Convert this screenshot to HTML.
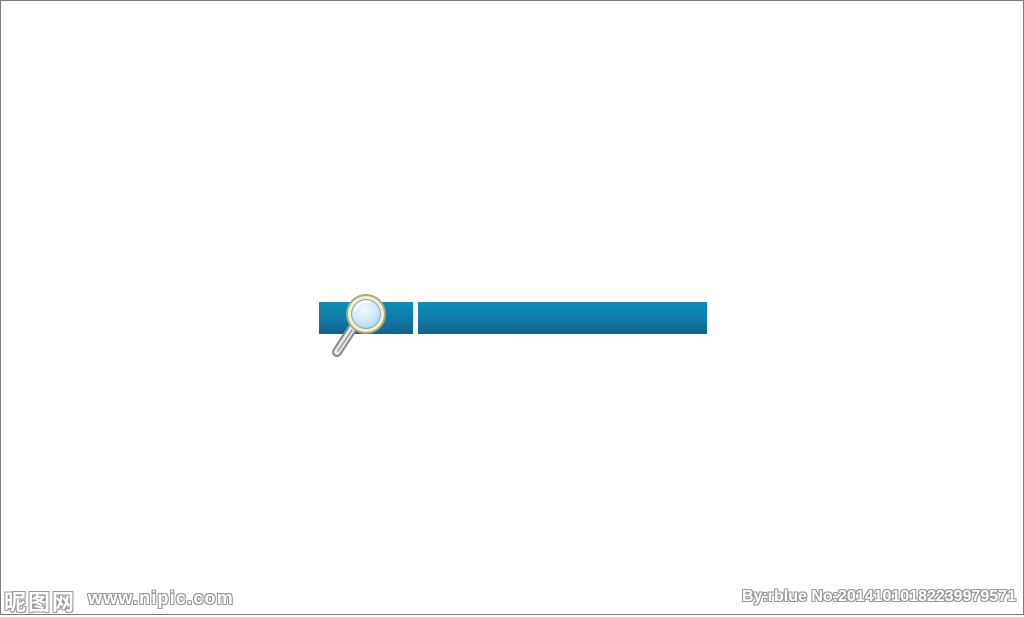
<!DOCTYPE html>
<html><head><meta charset="utf-8"><style>
html,body{margin:0;padding:0}
body{width:1024px;height:615px;position:relative;background:#fff;overflow:hidden;font-family:"Liberation Sans","Noto Sans CJK SC",sans-serif}
.frame{position:absolute;left:0;top:0;width:1022px;height:613px;border:1px solid #7a7a7a}
.bar{position:absolute;top:302px;height:32px;background:linear-gradient(#0a8fb8,#0f7aa5 55%,#165f8a)}
.wm{position:absolute;font-weight:bold;color:#fff;white-space:nowrap;
text-shadow:1px 0 #999,-1px 0 #999,0 1px #999,0 -1px #999,1px 1px #999,-1px -1px #999,1px -1px #999,-1px 1px #999}
</style></head><body>
<div class="frame"></div>
<div class="bar" style="left:319px;width:94px"></div>
<div class="bar" style="left:418px;width:289px"></div>
<svg style="position:absolute;left:325px;top:285px" width="70" height="80" viewBox="0 0 70 80">
<defs><radialGradient id="g" cx="0.45" cy="0.35" r="0.7"><stop offset="0" stop-color="#f2fbff"/><stop offset="0.6" stop-color="#cde9f8"/><stop offset="1" stop-color="#a9d3ee"/></radialGradient></defs>
<line x1="29" y1="41" x2="12" y2="67" stroke="#8a8a8a" stroke-width="10" stroke-linecap="round"/>
<line x1="29" y1="41" x2="12" y2="67" stroke="#e8e8e8" stroke-width="6" stroke-linecap="round"/>
<line x1="27" y1="45" x2="13" y2="66" stroke="#9a9a9a" stroke-width="1.5" stroke-linecap="round"/>
<circle cx="41" cy="29" r="20" fill="#a9a98a"/>
<circle cx="41" cy="29" r="18" fill="#f4f1c8"/>
<circle cx="41" cy="29" r="15" fill="#8fa8b5"/>
<circle cx="41" cy="29" r="14" fill="url(#g)"/>
<path d="M30 26 A12 12 0 0 1 44 17" stroke="#fff" stroke-width="2.5" fill="none" stroke-linecap="round" opacity="0.8"/>
</svg>
<div class="wm" style="left:4px;top:585px;font-size:22px;letter-spacing:2px">昵图网</div>
<div class="wm" style="left:88px;top:588px;font-size:18px;letter-spacing:1.2px">www.nipic.com</div>
<div class="wm" style="left:742px;top:588px;font-size:16px">By:rblue No:20141010182239979571</div>
</body></html>
